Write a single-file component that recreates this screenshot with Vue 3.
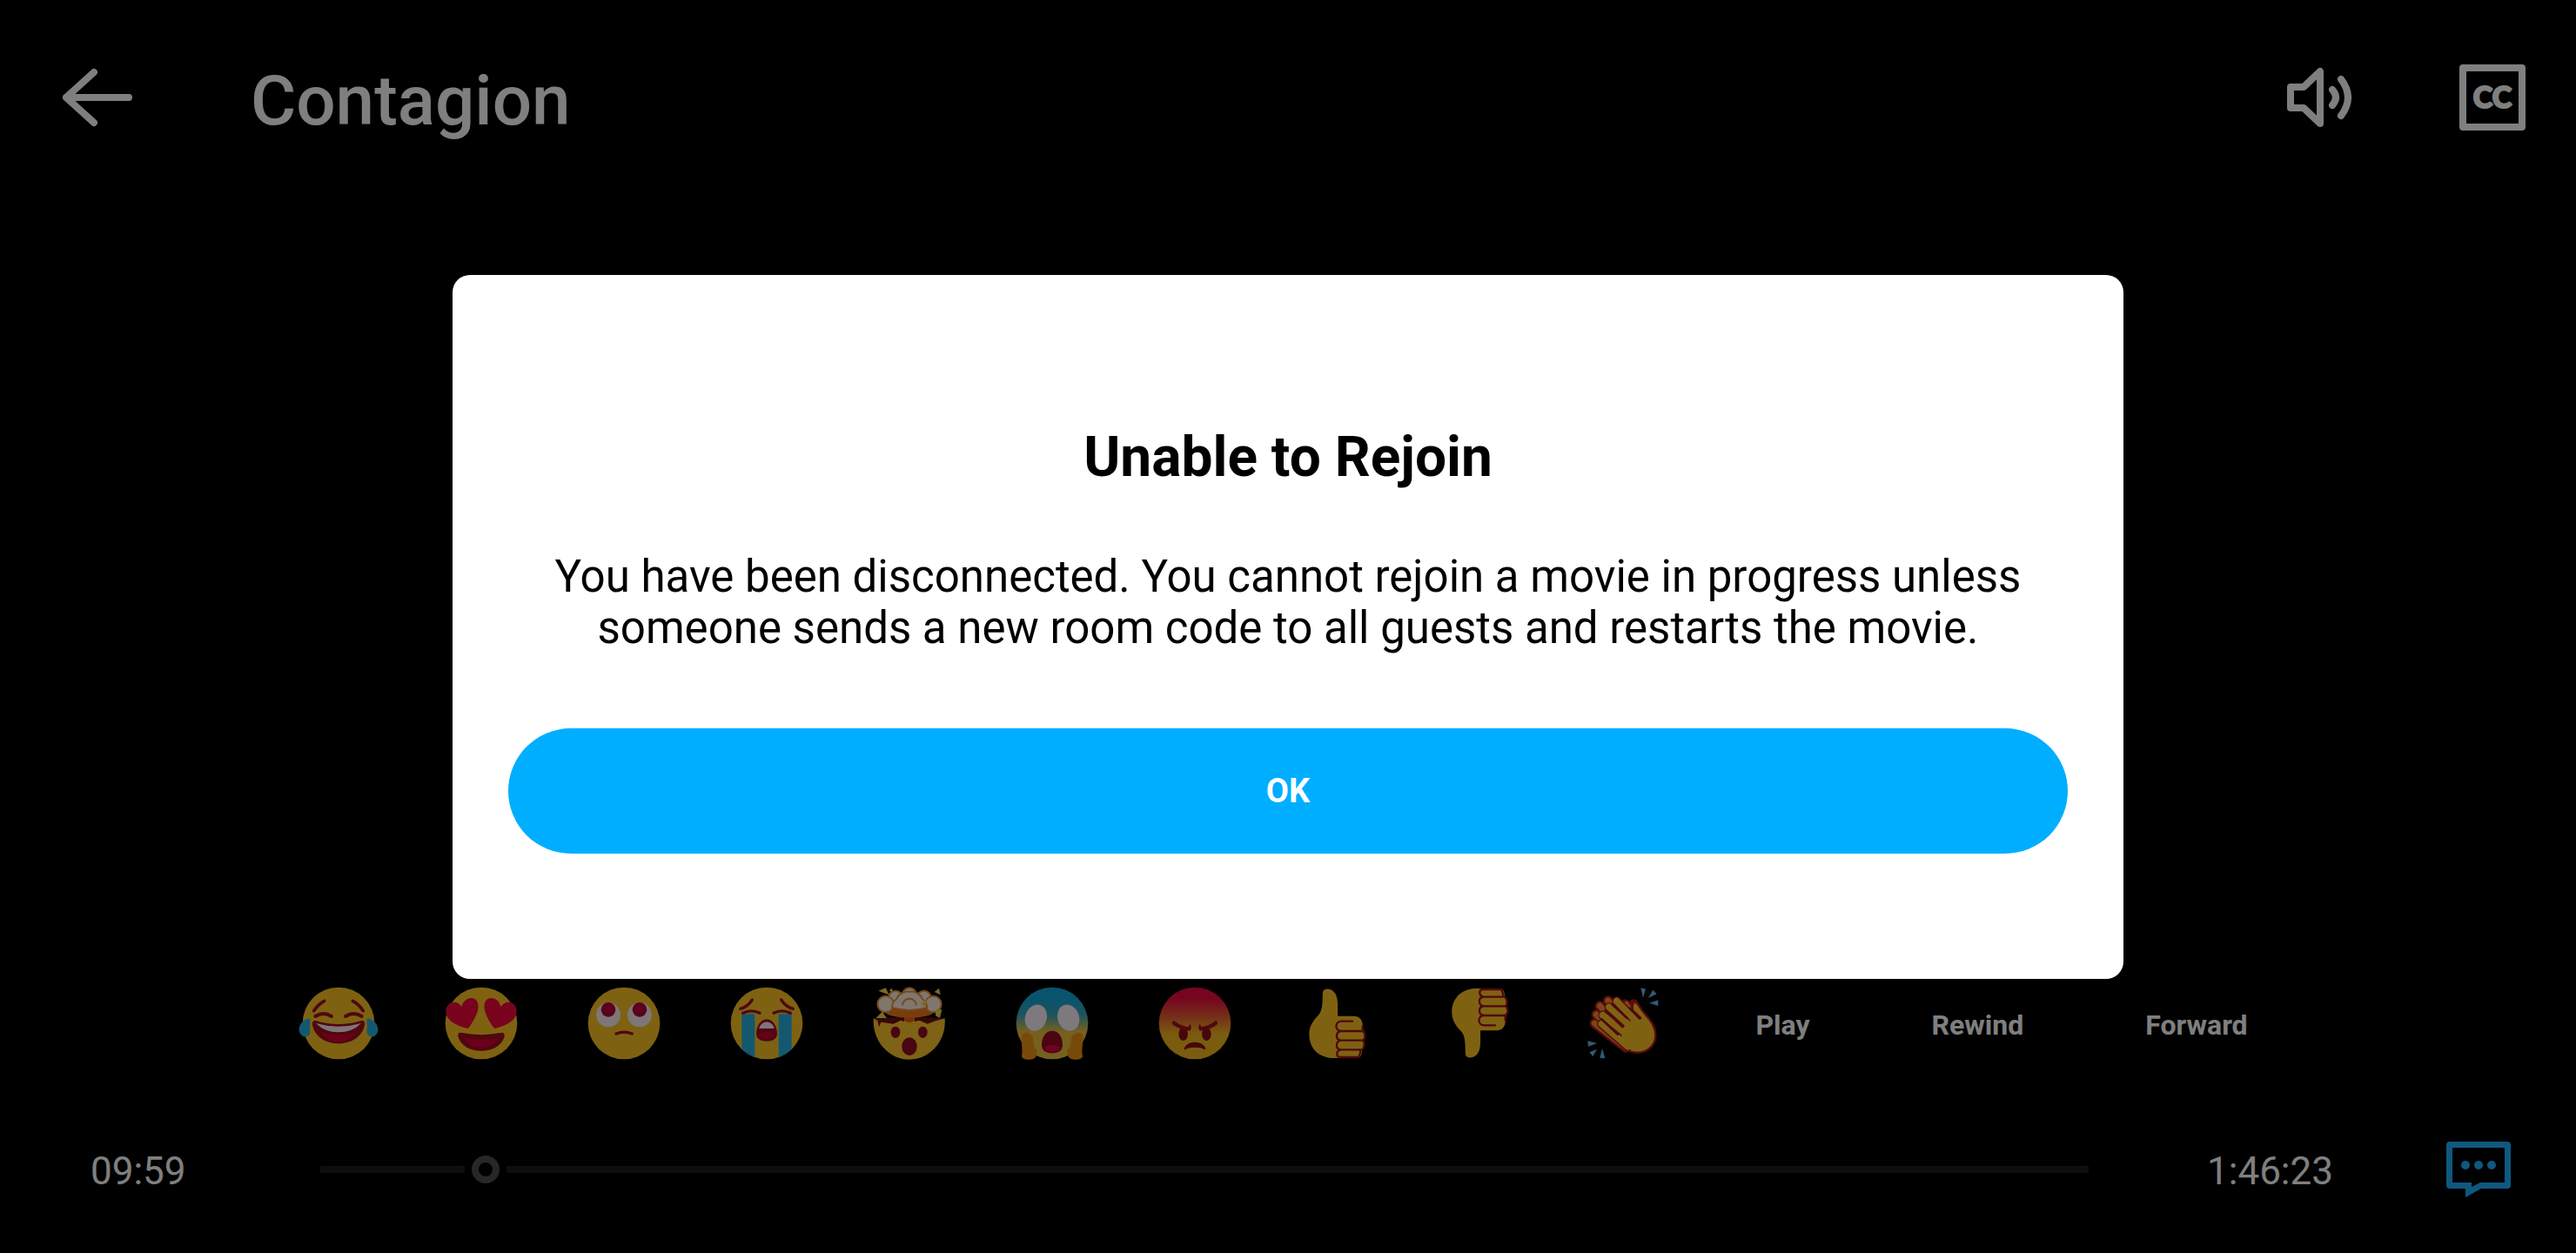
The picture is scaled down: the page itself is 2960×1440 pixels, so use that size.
<script setup>
import { ref, computed } from "vue";

const title = ref("Contagion");
const position = ref(599);
const duration = 6383;
const dialogOpen = ref(true);
const actions = ["Play", "Rewind", "Forward"];

function format(seconds) {
    const pad = (n) => String(n).padStart(2, "0");
    const h = Math.floor(seconds / 3600);
    const m = Math.floor((seconds % 3600) / 60);
    const s = seconds % 60;
    return h ? `${h}:${pad(m)}:${pad(s)}` : `${pad(m)}:${pad(s)}`;
}

const elapsed = computed(() => format(Number(position.value)));
const total = format(duration);
</script>

<template>
    <div class="player">
        <header class="top">
            <button class="icon" aria-label="Back">
                <svg viewBox="0 0 80 80" class="line">
                    <path d="M36 11 4 40 36 69M4 40H76" />
                </svg>
            </button>
            <h1>{{ title }}</h1>
            <button class="icon" aria-label="Volume">
                <svg viewBox="0 0 80 80" class="line">
                    <path d="M8 28H23L42 10V70L23 52H8Z" />
                    <path d="M56 31Q64 40 56 49M66 19Q82 40 66 61" />
                </svg>
            </button>
            <button class="icon" aria-label="Closed captions">
                <svg viewBox="0 0 80 80" class="line">
                    <rect x="6" y="6" width="68" height="68" />
                    <text x="40" y="52" class="cc">CC</text>
                </svg>
            </button>
        </header>

        <footer>
            <div class="reactions">
                <button class="emoji" aria-label="Tears of joy">
                    <svg viewBox="-138 -138 276 276">
                        <circle r="124" fill="#fcc524" />
                        <g id="joy-half">
                            <path d="M-85-43Q-70-66-49-77" class="feature" stroke-width="11" />
                            <path d="M-80-24Q-52-42-24-24" class="feature" stroke-width="12" />
                            <path d="M-99-17C-128-12-142 15-134 32C-128 48-108 50-101 40C-94 28-102 12-97-4Z" fill="#28b0e0" />
                        </g>
                        <use href="#joy-half" transform="scale(-1 1)" />
                        <path d="M-80-10Q0 16 80-10Q94-10 89 10C70 90-70 90-89 10Q-94-10-80-10Z" fill="#a00f1c" />
                        <path d="M-78 0Q0 22 78 0Q48 31 0 31Q-48 31-78 0Z" fill="#ffe8f4" />
                        <path d="M-62 32Q0 48 62 32Q34 64 0 64Q-34 64-62 32Z" fill="#d80034" />
                    </svg>
                </button>
                <button class="emoji" aria-label="Heart eyes">
                    <svg viewBox="-138 -138 276 276">
                        <circle r="124" fill="#fcc524" />
                        <path id="heart" d="M-45 18C-80 12-124-10-122-42C-121-76-82-84-67-56C-62-92-16-98-11-66C-6-40-28-5-45 18Z" fill="#f2063a" />
                        <use href="#heart" transform="scale(-1 1)" />
                        <path d="M-66 33Q0 46 66 33Q82 30 80 46C62 112-62 112-80 46Q-82 30-66 33Z" fill="#a00f1c" />
                        <path d="M-60 51Q0 60 60 51Q40 84 0 84Q-40 84-60 51Z" fill="#d80034" />
                    </svg>
                </button>
                <button class="emoji" aria-label="Rolling eyes">
                    <svg viewBox="-138 -138 276 276">
                        <circle r="124" fill="#fcc524" />
                        <circle cx="-54" cy="-29" r="42" fill="#ffecf0" />
                        <circle cx="54" cy="-29" r="42" fill="#ffecf0" />
                        <circle cx="-54" cy="-47" r="25" fill="#b80038" />
                        <circle cx="54" cy="-47" r="25" fill="#b80038" />
                        <path d="M-27 36Q0 25 28 36" class="feature" stroke-width="10" />
                    </svg>
                </button>
                <button class="emoji" aria-label="Crying">
                    <svg viewBox="-138 -138 276 276">
                        <circle r="124" fill="#fcc524" />
                        <g id="cry-half">
                            <path d="M-86-32H-41V117Q-66 108-86 89Z" fill="#28b0e0" />
                            <path d="M-82-35Q-52-50-24-35" class="feature" stroke-width="10" />
                            <path d="M-91-50Q-66-56-50-81" class="feature" stroke-width="10" />
                        </g>
                        <use href="#cry-half" transform="scale(-1 1)" />
                        <path d="M0-14C22-14 36 12 36 36C36 54 20 62 0 62C-20 62-36 54-36 36C-36 12-22-14 0-14Z" fill="#a00f1c" />
                        <path d="M-26 18C-20-12 20-12 26 18Z" fill="#ffe8f4" />
                        <path d="M-27 40Q0 18 27 40Q22 53 0 53Q-22 53-27 40Z" fill="#d80038" />
                    </svg>
                </button>
                <button class="emoji" aria-label="Mind blown">
                    <svg viewBox="-138 -138 276 276">
                        <path d="M-122-17L-60-20H60L122-17L110 8H-110Z" fill="#6a1010" />
                        <path d="M-124-17L-110-10L-105 12L-98-4L-55 2L-30-10L-18-6V-30H18V-6L35-10L62 2L90-8L122-17C128 62 70 125 0 125C-70 125-128 62-124-17Z" fill="#fcc52a" />
                        <path d="M-18-36H18L17-8L0-2L-17-8Z" fill="#ee5c12" />
                        <ellipse cy="-38" rx="82" ry="19" fill="#ee7a1c" />
                        <g fill="#ffeedc" stroke="#e8923a" stroke-width="6">
                            <circle cy="-98" r="24" />
                            <circle cx="-48" cy="-88" r="24" />
                            <circle cx="50" cy="-88" r="24" />
                            <circle cx="-82" cy="-66" r="28" />
                            <circle cx="82" cy="-66" r="28" />
                            <path d="M-60-54A34 34 0 0 1-44-84A34 34 0 0 1-22-105A34 34 0 0 1 0-109A34 34 0 0 1 24-105A34 34 0 0 1 44-84A34 34 0 0 1 60-54Q0-36-60-54Z" />
                            <path d="M-24-62C-22-92 22-92 24-62" fill="none" />
                        </g>
                        <path d="M-107-112L-82-122L-70-98ZM-70-112L-60-122L-58-108ZM86-108L102-121L107-98ZM-116-18L-94-40L-78-18ZM90-48L112-47L105-18L90-26ZM40-66L60-86L54-58Z" fill="#f2d548" />
                        <ellipse cx="-48" cy="31" rx="16" ry="20" fill="#8f0d22" />
                        <ellipse cx="46" cy="31" rx="16" ry="20" fill="#8f0d22" />
                        <ellipse cy="80" rx="26" ry="31" fill="#8f0d22" />
                    </svg>
                </button>
                <button class="emoji" aria-label="Screaming">
                    <svg viewBox="-138 -138 276 276">
                        <defs>
                            <linearGradient id="cold" x2="0" y2="1">
                                <stop offset=".15" stop-color="#10a8dc" />
                                <stop offset=".38" stop-color="#3aa6b8" />
                                <stop offset=".62" stop-color="#ecc03c" />
                            </linearGradient>
                        </defs>
                        <circle r="124" fill="url(#cold)" />
                        <g id="scream-half">
                            <ellipse cx="-56" cy="-19" rx="37" ry="46" transform="rotate(18 -56 -19)" fill="#fdf2fa" />
                            <path d="M-106 44C-100 24-72 32-66 52C-62 70-68 80-52 92L-54 110C-58 130-102 130-105 114C-100 90-108 66-106 44Z" fill="#f09414" />
                        </g>
                        <use href="#scream-half" transform="scale(-1 1)" />
                        <path d="M0 26C24 26 36 50 36 74C36 94 22 103 0 103C-22 103-36 94-36 74C-36 50-24 26 0 26Z" fill="#980826" />
                        <path d="M-28 84Q0 66 28 84Q24 98 0 98Q-24 98-28 84Z" fill="#dc0848" />
                    </svg>
                </button>
                <button class="emoji" aria-label="Angry">
                    <svg viewBox="-138 -138 276 276">
                        <defs>
                            <linearGradient id="hot" x2="0" y2="1">
                                <stop offset=".15" stop-color="#ec0a40" />
                                <stop offset=".4" stop-color="#ea5a32" />
                                <stop offset=".65" stop-color="#f4b81e" />
                            </linearGradient>
                        </defs>
                        <circle r="124" fill="url(#hot)" />
                        <g id="angry-half">
                            <ellipse cx="-40" cy="37" rx="16" ry="23" fill="#8f0d18" />
                            <path d="M-72-1Q-50 16-20 19" class="feature" stroke-width="13" />
                            <path d="M-17 8V18" class="feature" stroke-width="7" />
                        </g>
                        <use href="#angry-half" transform="scale(-1 1)" />
                        <path d="M-34 88C-24 62 24 62 34 88C18 78-18 78-34 88Z" fill="#8f0d18" stroke="#8f0d18" stroke-width="6" stroke-linejoin="round" />
                    </svg>
                </button>
                <button class="emoji" aria-label="Thumbs up">
                    <svg viewBox="-138 -138 276 276">
                        <g id="thumb">
                            <path d="M-51-107C-49-123-21-123-8-103C3-85 0-57 0-25H54C79-25 89-7 86 17C96 28 96 46 89 59C93 72 90 84 84 92C84 111 78 120 64 120H-20C-70 116-98 83-98 38C-98 8-82-12-66-28C-49-47-53-82-51-107Z" fill="#fcc524" />
                            <path d="M51-7H12C-10-5-10 25 11 27H86M11 27C-8 31-8 57 11 59H86M11 59C-8 63-8 89 11 91H84M11 91C-6 95-6 115 8 117H70Q78 112 79 93M86 11V27C97 34 97 50 88 59C95 68 92 85 84 91" class="feature" stroke-width="7" />
                        </g>
                    </svg>
                </button>
                <button class="emoji" aria-label="Thumbs down">
                    <svg viewBox="-138 -138 276 276">
                        <use href="#thumb" transform="scale(1 -1)" />
                    </svg>
                </button>
                <button class="emoji" aria-label="Clapping">
                    <svg viewBox="-138 -138 276 276">
                        <g fill="none" stroke-linecap="round">
                            <path d="M-52-78L20 0M-80-60L0 30M-92-30L-10 50M-98 0L10 84" stroke="#b8141c" stroke-width="34" />
                            <path d="M-52-78L20 0M-80-60L0 30M-92-30L-10 50M-98 0L10 84" stroke="#f0902c" stroke-width="21" />
                            <path d="M36-66L60-20" stroke="#b8141c" stroke-width="34" />
                            <path d="M8-70L40-24" stroke="#b8141c" stroke-width="26" />
                            <path d="M12-68L40-24" stroke="#f0902c" stroke-width="16" />
                        </g>
                        <path d="M-22-80L40-20C34-44 26-60 38-75C56-68 58-50 72-36C92-12 112 8 112 42C112 76 84 101 48 101C24 101 6 90-10 72L-80 8Z" fill="#fcc524" stroke="#b8141c" stroke-width="7" stroke-linejoin="round" />
                        <g fill="none" stroke-linecap="round">
                            <path d="M-22-76L44-8M-48-56L34 18M-70-28L20 44M-74 2L16 80" stroke="#b8141c" stroke-width="32" />
                            <path d="M-22-76L44-8M-48-56L34 18M-70-28L20 44M-74 2L16 80" stroke="#fcc524" stroke-width="23" />
                            <circle cx="50" cy="42" r="44" fill="#fcc524" stroke="#fcc524" stroke-width="22" />
                            <path d="M-38-66L14-18M-60-44L-2 12M-74-14L-18 38M24-52L60-18" stroke="#a00f1c" stroke-width="8" />
                        </g>
                        <path d="M61-122L78-118L69-88ZM103-115L116-101L86-86ZM121-80V-60L90-70ZM-122 61L-89 69L-120 80ZM-116 100L-90 89L-104 114ZM-72 86L-62 121L-80 120Z" fill="#5fb8e8" />
                    </svg>
                </button>
                <button v-for="action in actions" :key="action" class="action">{{ action }}</button>
            </div>

            <div class="timeline">
                <span class="time">{{ elapsed }}</span>
                <input v-model="position" type="range" min="0" :max="duration" aria-label="Position" />
                <span class="time">{{ total }}</span>
                <button class="icon chat" aria-label="Chat">
                    <svg viewBox="0 0 80 80">
                        <path fill-rule="evenodd" d="M7 8H73Q77 8 77 12V58Q77 62 73 62H43L25 72V62H7Q3 62 3 58V12Q3 8 7 8ZM10 15V55H32V60L42 55H70V15Z" />
                        <circle cx="25" cy="35" r="5" />
                        <circle cx="40" cy="35" r="5" />
                        <circle cx="55" cy="35" r="5" />
                    </svg>
                </button>
            </div>
        </footer>

        <div v-if="dialogOpen" class="backdrop">
            <section class="dialog" role="alertdialog" aria-labelledby="dialog-title" aria-describedby="dialog-text">
                <h2 id="dialog-title">Unable to Rejoin</h2>
                <p id="dialog-text">
                    You have been disconnected. You cannot rejoin a movie in progress unless
                    someone sends a new room code to all guests and restarts the movie.
                </p>
                <button class="ok" @click="dialogOpen = false">OK</button>
            </section>
        </div>
    </div>
</template>

<style>
body {
    margin: 0;
    background: #000;
}
</style>

<style scoped>
.player {
    position: relative;
    display: flex;
    flex-direction: column;
    justify-content: space-between;
    box-sizing: border-box;
    min-height: 100vh;
    padding: 64px 0 56px;
    background: #000;
    color: #fff;
    font-family: Roboto, sans-serif;
}
button {
    padding: 0;
    border: none;
    background: none;
    color: inherit;
    font: inherit;
    cursor: pointer;
}
svg {
    display: block;
    width: 100%;
    height: 100%;
}
.top {
    display: flex;
    align-items: center;
    gap: 120px;
    padding: 0 56px 0 72px;
}
h1 {
    flex: 1;
    margin: 0;
    padding: 8px 0 0 16px;
    font-size: 80px;
    font-weight: 500;
    line-height: 88px;
}
.icon {
    flex: none;
    width: 80px;
    height: 80px;
}
.line {
    fill: none;
    stroke: #fff;
    stroke-width: 8;
    stroke-linecap: round;
    stroke-linejoin: round;
}
.cc {
    fill: #fff;
    stroke-width: 2;
    font-family: Lato, sans-serif;
    font-size: 34px;
    font-weight: 900;
    text-anchor: middle;
}
.feature {
    fill: none;
    stroke: #a00f1c;
    stroke-linecap: round;
    stroke-linejoin: round;
}
.reactions {
    display: flex;
    justify-content: center;
    align-items: center;
    margin-bottom: 82px;
}
.emoji {
    width: 92px;
    height: 92px;
    margin: 0 36px;
}
.action {
    margin: 0 70px;
    padding-top: 4px;
    font-size: 32px;
    font-weight: 700;
}
.timeline {
    display: flex;
    align-items: center;
    height: 80px;
    padding: 0 72px 0 104px;
}
.time {
    padding-top: 4px;
    font-size: 44px;
    line-height: 56px;
}
/* the range reaches half a thumb past the visible track on both sides */
input {
    flex: 1;
    min-width: 0;
    height: 48px;
    margin: 0 120px 0 138px;
    appearance: none;
    background: linear-gradient(#1c1c1c, #1c1c1c) center / calc(100% - 32px) 8px no-repeat;
}
input::-webkit-slider-thumb {
    box-sizing: border-box;
    width: 32px;
    height: 32px;
    appearance: none;
    border: 8px solid #4e4e4e;
    border-radius: 50%;
    background: #000;
    box-shadow: 0 0 0 8px #000;
}
.chat {
    margin-left: 127px;
    fill: #1eb0ff;
}
.backdrop {
    position: absolute;
    inset: 0;
    display: flex;
    justify-content: center;
    align-items: center;
    background: rgba(0, 0, 0, 0.5);
}
.dialog {
    box-sizing: border-box;
    width: 100%;
    max-width: 1920px;
    padding: 172px 64px 144px;
    border-radius: 20px;
    background: #fff;
    color: #000;
    text-align: center;
}
h2 {
    margin: 0 0 70px;
    font-size: 64px;
    font-weight: 700;
    line-height: 75px;
}
p {
    margin: 0 0 86px;
    font-size: 51px;
    line-height: 59px;
}
.ok {
    width: 100%;
    height: 144px;
    border-radius: 72px;
    background: #00aeff;
    color: #fff;
    font-size: 38px;
    font-weight: 700;
}
</style>
